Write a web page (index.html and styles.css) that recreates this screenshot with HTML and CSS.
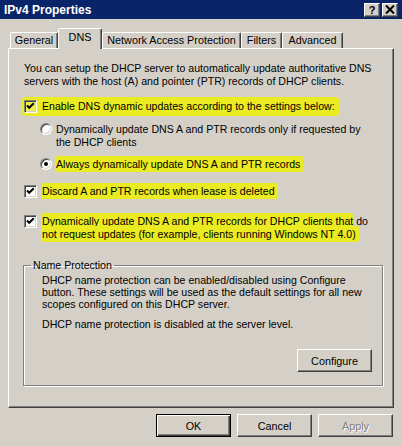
FILE: index.html
```html
<!DOCTYPE html>
<html>
<head>
<meta charset="utf-8">
<link rel="stylesheet" href="styles.css">
</head>
<body>
<div class="window">
  <div class="titlebar">
    <span class="title">IPv4 Properties</span>
    <div class="title-buttons">
      <span class="tbtn help">?</span>
      <span class="tbtn close"><svg width="10" height="9" viewBox="0 0 10 9"><path d="M1 0.5 L9 8.5 M9 0.5 L1 8.5" stroke="#000" stroke-width="2"/></svg></span>
    </div>
  </div>
  <div class="tabs">
    <div class="tab w-general">General</div>
    <div class="tab active w-dns">DNS</div>
    <div class="tab w-nap">Network Access Protection</div>
    <div class="tab w-filters">Filters</div>
    <div class="tab w-adv">Advanced</div>
  </div>
  <div class="panel">
    <p class="intro">You can setup the DHCP server to automatically update authoritative DNS<br>servers with the host (A) and pointer (PTR) records of DHCP clients.</p>

    <div class="opt cb1 marked">
      <span class="cb on hlbox"><svg width="13" height="13" viewBox="0 0 13 13"><path d="M3 5.5 L5.2 7.8 L9.8 3.2" fill="none" stroke="#000" stroke-width="2"/></svg></span>
      <span class="lbl">Enable DNS dynamic updates according to the settings below:</span>
    </div>

    <div class="opt radio-row r1">
      <span class="radio"></span>
      <span class="lbl">Dynamically update DNS A and PTR records only if requested by<br>the DHCP clients</span>
    </div>

    <div class="opt radio-row r2">
      <span class="radio on"></span>
      <span class="lbl"><span class="hl">Always dynamically update DNS A and PTR records</span></span>
    </div>

    <div class="opt cb2">
      <span class="cb on"><svg width="13" height="13" viewBox="0 0 13 13"><path d="M3 5.5 L5.2 7.8 L9.8 3.2" fill="none" stroke="#000" stroke-width="2"/></svg></span>
      <span class="lbl"><span class="hl">Discard A and PTR records when lease is deleted</span></span>
    </div>

    <div class="opt cb3">
      <span class="cb on"><svg width="13" height="13" viewBox="0 0 13 13"><path d="M3 5.5 L5.2 7.8 L9.8 3.2" fill="none" stroke="#000" stroke-width="2"/></svg></span>
      <span class="lbl"><span class="hl tight">Dynamically update DNS A and PTR records for DHCP clients that</span> do<br><span class="hl">not request updates (for example, clients running Windows NT 4.0)</span></span>
    </div>

    <fieldset class="group">
      <legend>Name Protection</legend>
      <p class="gtext">DHCP name protection can be enabled/disabled using Configure<br>button. These settings will be used as the default settings for all new<br>scopes configured on this DHCP server.</p>
      <p class="gtext status">DHCP name protection is disabled at the server level.</p>
      <div class="group-actions">
        <button class="btn">Configure</button>
      </div>
    </fieldset>
  </div>
  <div class="actions">
    <button class="btn default">OK</button>
    <button class="btn">Cancel</button>
    <button class="btn" disabled>Apply</button>
  </div>
</div>
</body>
</html>
```

FILE: styles.css
```css
html, body {
  margin: 0;
  padding: 0;
}
body {
  width: 402px;
  height: 446px;
  overflow: hidden;
  background: #d4d0c8;
  font-family: "Liberation Sans", Arial, sans-serif;
  font-size: 10.6px;
  color: #000;
}
.window {
  display: flex;
  flex-direction: column;
  height: 446px;
}
.titlebar {
  height: 19px;
  background: #0a246a;
  display: flex;
  align-items: center;
  justify-content: space-between;
  padding: 0 4px 0 4px;
}
.title {
  color: #fff;
  font-weight: bold;
  font-size: 12px;
}
.title-buttons {
  display: flex;
  gap: 2px;
}
.tbtn {
  box-sizing: border-box;
  width: 16px;
  height: 14px;
  display: flex;
  align-items: center;
  justify-content: center;
  background: #d4d0c8;
  border: 1px solid;
  border-color: #fff #404040 #404040 #fff;
  box-shadow: inset -1px -1px #808080;
  font-weight: bold;
  font-size: 11px;
  line-height: 12px;
}
.tabs {
  display: flex;
  align-items: flex-end;
  height: 20px;
  margin: 9px 8px 0 8px;
  padding-left: 2px;
}
.tab {
  box-sizing: border-box;
  height: 16px;
  border: 1px solid;
  border-bottom: none;
  border-color: #fff #404040 transparent #fff;
  border-radius: 2px 2px 0 0;
  box-shadow: inset -1px 0 #808080;
  text-align: center;
  line-height: 15px;
  font-size: 10.8px;
  white-space: nowrap;
}
.tab.active {
  height: 21px;
  margin-bottom: -1px;
  padding-top: 2px;
  line-height: 13px;
  background: #d4d0c8;
  position: relative;
  z-index: 1;
}
.w-general { width: 48px; }
.w-dns { width: 44px; }
.w-nap { width: 139px; }
.w-filters { width: 41px; }
.w-adv { width: 61px; }

.panel {
  box-sizing: border-box;
  height: 360px;
  margin: 0 8px;
  border: 1px solid;
  border-color: #fff #404040 #404040 #fff;
  box-shadow: inset -1px -1px #808080;
  padding: 13px 10px 0 15px;
  line-height: 13px;
}
.intro {
  margin: 0;
  white-space: nowrap;
}
.opt {
  display: flex;
  align-items: flex-start;
  white-space: nowrap;
}
.cb1 { margin-top: 12px; }
.r1 { margin-top: 10px; margin-left: 16px; }
.r2 { margin-top: 9px; margin-left: 16px; }
.cb2 { margin-top: 14px; }
.cb3 { margin-top: 17px; }

.cb {
  box-sizing: border-box;
  flex: none;
  width: 13px;
  height: 13px;
  border: 1px solid;
  border-color: #808080 #fff #fff #808080;
  box-shadow: inset 1px 1px #404040, inset -1px -1px #d4d0c8;
  background: #fff;
  margin-right: 5px;
}
.cb svg {
  display: block;
  margin: -1px 0 0 -1px;
}
.cb.hlbox {
  background: #f0f04a;
}
.radio {
  box-sizing: border-box;
  flex: none;
  width: 12px;
  height: 12px;
  border-radius: 50%;
  border: 1px solid;
  border-color: #808080 #fff #fff #808080;
  box-shadow: inset 1px 1px #404040, inset -1px -1px #d4d0c8;
  background: #fff;
  margin: 0 4px 0 0;
  display: flex;
  align-items: center;
  justify-content: center;
}
.radio.on::after {
  content: "";
  width: 4px;
  height: 4px;
  border-radius: 50%;
  background: #000;
}
.marked {
  width: fit-content;
  background: #ebeb22;
  box-shadow: 0 0 0 3px #ebeb22;
  padding-right: 2px;
  border-radius: 2px;
}
.hl {
  background: #ebeb22;
  box-shadow: 0 2px 0 #ebeb22, 0 -2px 0 #ebeb22;
  padding: 0 3px 0 1px;
  margin-left: -1px;
  -webkit-box-decoration-break: clone;
  box-decoration-break: clone;
  border-radius: 2px;
}
.hl.tight {
  padding-right: 0;
}

.group {
  box-sizing: border-box;
  width: 360px;
  margin: 18px 0 0 -1px;
  padding: 2px 10px 13px 18px;
  border: 1px solid #808080;
  box-shadow: inset 1px 1px #fff, 1px 1px #fff;
  min-width: 0;
}
.group legend {
  padding: 0 2px;
  margin-left: -11px;
  line-height: 13px;
}
.gtext {
  margin: 0;
  line-height: 12px;
  white-space: nowrap;
}
.gtext.status {
  margin-top: 8px;
}
.group-actions {
  display: flex;
  justify-content: flex-end;
  margin-top: 19px;
}
.btn {
  box-sizing: border-box;
  width: 75px;
  height: 23px;
  padding: 0;
  border: 1px solid;
  border-color: #fff #404040 #404040 #fff;
  box-shadow: inset -1px -1px #808080;
  background: #d4d0c8;
  font-family: "Liberation Sans", Arial, sans-serif;
  font-size: 10.8px;
  color: #000;
}
.btn.default {
  border-color: #000;
  box-shadow: inset 1px 1px #fff, inset -1px -1px #404040, inset -2px -2px #808080;
}
.btn:disabled {
  color: #808080;
  text-shadow: 1px 1px #fff;
}
.actions {
  display: flex;
  justify-content: flex-end;
  gap: 6px;
  margin-top: 6px;
  padding-right: 9px;
}
```
